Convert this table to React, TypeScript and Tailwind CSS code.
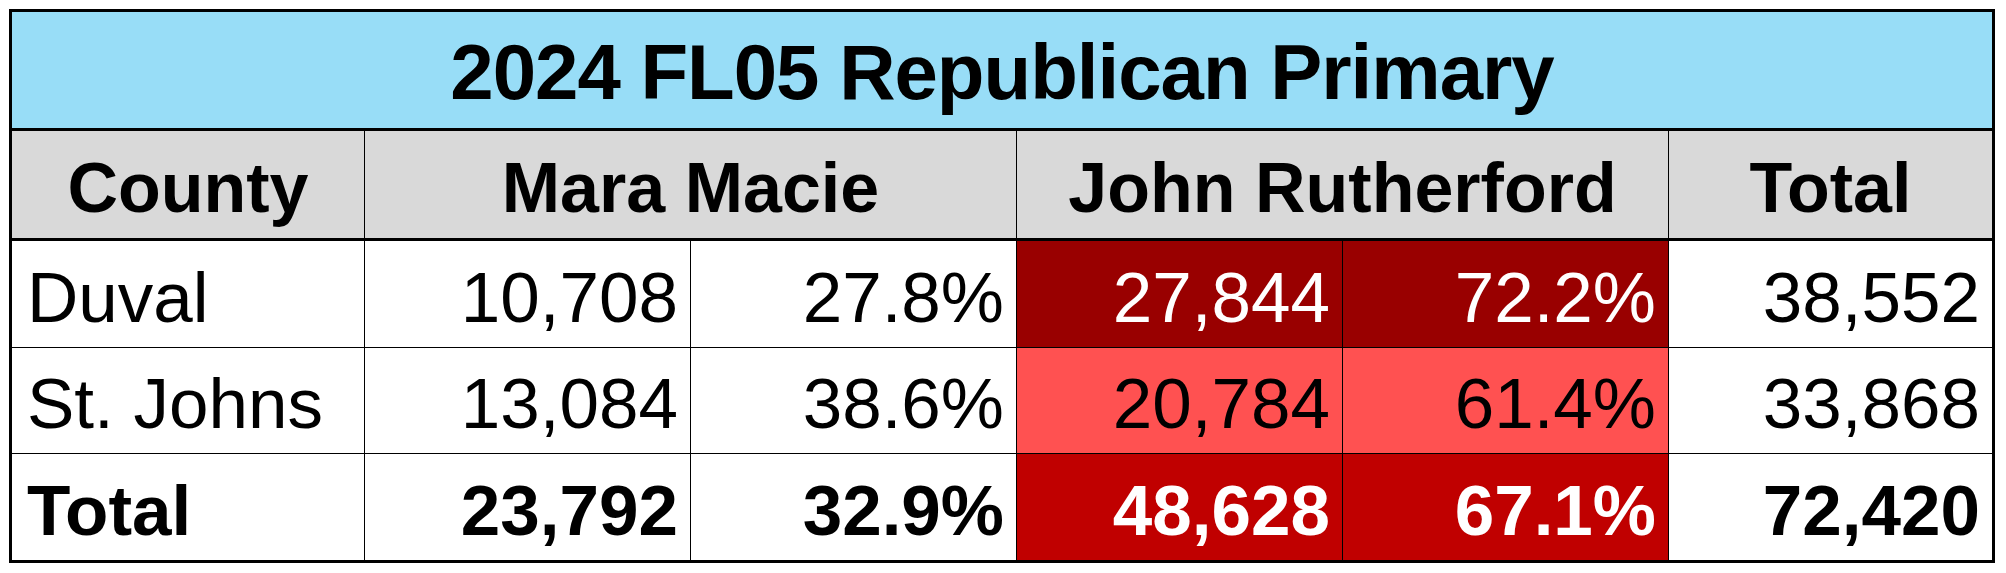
const rows = [
  { county: 'Duval', macie: '10,708', maciePct: '27.8%', ruth: '27,844', ruthPct: '72.2%', total: '38,552', shade: 'bg-[#990000] text-white', bold: false },
  { county: 'St. Johns', macie: '13,084', maciePct: '38.6%', ruth: '20,784', ruthPct: '61.4%', total: '33,868', shade: 'bg-[#ff5151] text-black', bold: false },
  { county: 'Total', macie: '23,792', maciePct: '32.9%', ruth: '48,628', ruthPct: '67.1%', total: '72,420', shade: 'bg-[#c00000] text-white', bold: true },
];

export default function App() {
  return (
    <div className="w-[2006px] h-[573px] bg-white pt-[9px] pl-[9px] font-['Liberation_Sans',Arial,sans-serif] text-black">
      <div className="w-[1986px] border-[3px] border-black">
        {/* title */}
        <div className="h-[119px] bg-[#98ddf7] border-b-[3px] border-black flex items-center justify-center">
          <span className="text-[78px] font-bold leading-none tracking-[-1px] pt-[4px]">2024 FL05 Republican Primary</span>
        </div>

        {/* header */}
        <div className="h-[110px] bg-[#d9d9d9] border-b-[3px] border-black flex text-[70px] font-bold leading-none">
          <div className="w-[353px] border-r border-black flex items-center justify-center pt-[6px]">County</div>
          <div className="w-[652px] border-r border-black flex items-center justify-center pt-[6px]">Mara Macie</div>
          <div className="w-[652px] border-r border-black flex items-center justify-center pt-[6px]">John Rutherford</div>
          <div className="flex-1 flex items-center justify-center pt-[6px]">Total</div>
        </div>

        {/* data */}
        {rows.map((r, i) => (
          <div
            key={r.county}
            className={`flex text-[71px] leading-none ${i === 0 ? 'h-[107px]' : 'h-[106px]'} ${i < rows.length - 1 ? 'border-b border-black' : ''} ${r.bold ? 'font-bold' : ''}`}
          >
            <div className="w-[353px] border-r border-black flex items-center pl-[15px] pt-[6px]">{r.county}</div>
            <div className="w-[326px] border-r border-black flex items-center justify-end pr-[12px] pt-[6px]">{r.macie}</div>
            <div className="w-[326px] border-r border-black flex items-center justify-end pr-[12px] pt-[6px]">{r.maciePct}</div>
            <div className={`w-[326px] border-r border-black flex items-center justify-end pr-[12px] pt-[6px] ${r.shade}`}>{r.ruth}</div>
            <div className={`w-[326px] border-r border-black flex items-center justify-end pr-[12px] pt-[6px] ${r.shade}`}>{r.ruthPct}</div>
            <div className="flex-1 flex items-center justify-end pr-[12px] pt-[6px]">{r.total}</div>
          </div>
        ))}
      </div>
    </div>
  );
}
